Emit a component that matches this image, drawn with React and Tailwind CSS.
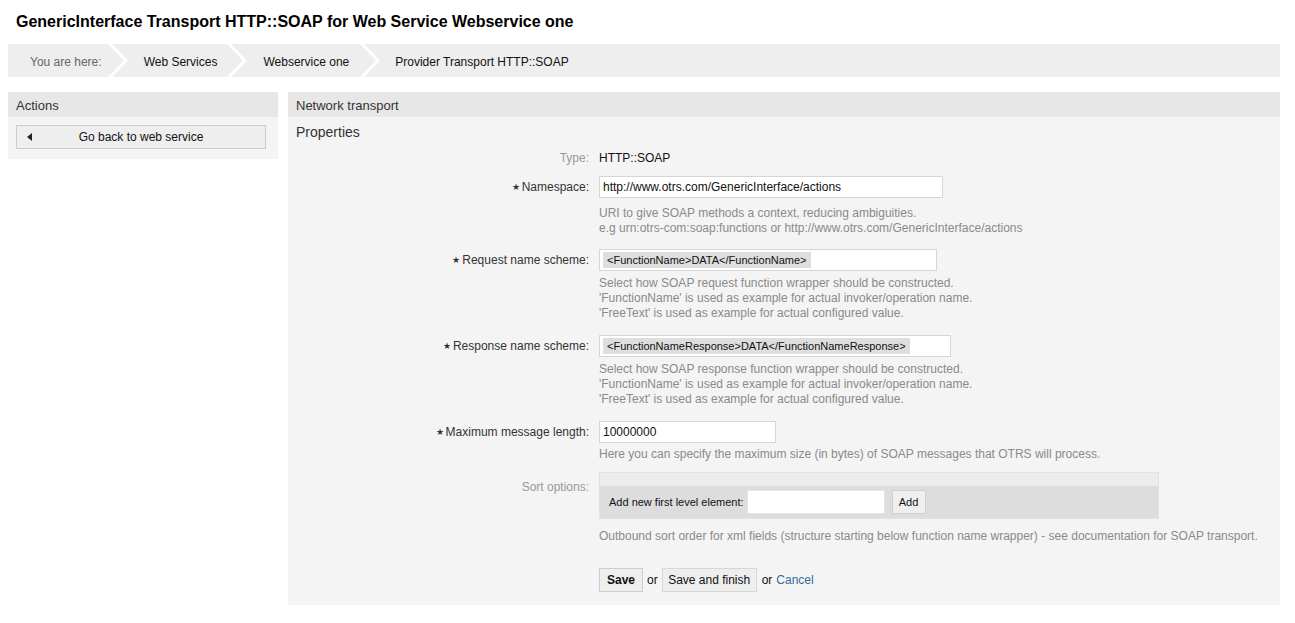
import React from "react";

const Chevron = () => (
  <svg width="20" height="33" viewBox="0 0 20 33" className="shrink-0">
    <polyline points="1,-1 18,16.5 1,34" fill="none" stroke="#ffffff" strokeWidth="3" />
  </svg>
);

const Star = () => <span className="text-[9px] mr-[2px] relative top-[-1px]">★</span>;

const Help = ({ lines, className = "" }) => (
  <div className={`ml-[311px] text-[12px] leading-[15px] text-[#8a8a8a] ${className}`}>
    {lines.map((l) => (
      <div key={l}>{l}</div>
    ))}
  </div>
);

const FieldRow = ({ label, required, children, className = "" }) => (
  <div className={`flex items-center ${className}`}>
    <div className="w-[301px] shrink-0 text-right text-[12px] text-[#333]">
      {required && <Star />}
      {label}
    </div>
    <div className="ml-[10px]">{children}</div>
  </div>
);

const TextBox = ({ width, children }) => (
  <div
    className="h-[22px] bg-white border border-[#d6d6d6] flex items-center px-[3px] text-[12px] text-[#111]"
    style={{ width }}
  >
    {children}
  </div>
);

const Scheme = ({ width, text }) => (
  <div
    className="h-[22px] bg-white border border-[#d6d6d6] flex items-center px-[3px]"
    style={{ width }}
  >
    <span className="bg-[#dedede] text-[11px] text-[#111] px-[4px] leading-[16px]">{text}</span>
  </div>
);

export default function App() {
  return (
    <div className="min-h-[623px] bg-white font-['Liberation_Sans',Arial,sans-serif] text-[#333]">
      <h1 className="pl-[16px] pt-[12px] text-[16px] leading-[19px] font-bold text-black">
        GenericInterface Transport HTTP::SOAP for Web Service Webservice one
      </h1>

      <div className="ml-[8px] mr-[15px] mt-[13px] h-[33px] bg-[#eeeeee] flex items-center text-[12px] overflow-hidden">
        <span className="pl-[22px] pr-[6px] pt-[2px] text-[#666]">You are here:</span>
        <Chevron />
        <span className="pl-[16px] pr-[10px] pt-[2px] text-[#111]">Web Services</span>
        <Chevron />
        <span className="pl-[16px] pr-[11px] pt-[2px] text-[#111]">Webservice one</span>
        <Chevron />
        <span className="pl-[15px] pt-[2px] text-[#111]">Provider Transport HTTP::SOAP</span>
      </div>

      <div className="flex items-start gap-[10px] ml-[8px] mr-[15px] mt-[15px]">
        <div className="w-[270px] shrink-0">
          <div className="h-[25px] bg-[#e7e7e7] flex items-center px-[8px] pt-[2px] text-[13px] text-[#333]">Actions</div>
          <div className="bg-[#f4f4f4] px-[8px] pt-[8px] pb-[10px]">
            <button className="w-[250px] h-[24px] bg-[#eeeeee] border border-[#cccccc] flex items-center text-[12px] text-[#111] relative">
              <svg width="5" height="8" viewBox="0 0 5 8" className="absolute left-[10px] top-[7px]">
                <polygon points="5,0 0,4 5,8" fill="#222" />
              </svg>
              <span className="w-full text-center">Go back to web service</span>
            </button>
          </div>
        </div>

        <div className="flex-1">
          <div className="h-[25px] bg-[#e7e7e7] flex items-center px-[8px] pt-[2px] text-[13px] text-[#333]">Network transport</div>
          <div className="bg-[#f4f4f4] pt-[6px] pb-[13px]">
            <div className="px-[8px] text-[14px] leading-[18px] text-[#333]">Properties</div>

            <div className="flex mt-[9px] leading-[16px]">
              <div className="w-[301px] shrink-0 text-right text-[12px] text-[#999]">Type:</div>
              <div className="ml-[10px] text-[12px] text-[#111]">HTTP::SOAP</div>
            </div>

            <FieldRow label="Namespace:" required className="mt-[10px]">
              <TextBox width={344}>http://www.otrs.com/GenericInterface/actions</TextBox>
            </FieldRow>
            <Help
              className="mt-[8px]"
              lines={[
                "URI to give SOAP methods a context, reducing ambiguities.",
                "e.g urn:otrs-com:soap:functions or http://www.otrs.com/GenericInterface/actions",
              ]}
            />

            <FieldRow label="Request name scheme:" required className="mt-[13px]">
              <Scheme width={338} text="<FunctionName>DATA</FunctionName>" />
            </FieldRow>
            <Help
              className="mt-[5px]"
              lines={[
                "Select how SOAP request function wrapper should be constructed.",
                "'FunctionName' is used as example for actual invoker/operation name.",
                "'FreeText' is used as example for actual configured value.",
              ]}
            />

            <FieldRow label="Response name scheme:" required className="mt-[14px]">
              <Scheme width={352} text="<FunctionNameResponse>DATA</FunctionNameResponse>" />
            </FieldRow>
            <Help
              className="mt-[5px]"
              lines={[
                "Select how SOAP response function wrapper should be constructed.",
                "'FunctionName' is used as example for actual invoker/operation name.",
                "'FreeText' is used as example for actual configured value.",
              ]}
            />

            <FieldRow label="Maximum message length:" required className="mt-[14px]">
              <TextBox width={177}>10000000</TextBox>
            </FieldRow>
            <Help
              className="mt-[4px]"
              lines={["Here you can specify the maximum size (in bytes) of SOAP messages that OTRS will process."]}
            />

            <div className="flex mt-[10px]">
              <div className="w-[301px] shrink-0 text-right text-[12px] text-[#999] pt-[6px]">Sort options:</div>
              <div className="ml-[10px] w-[560px] border border-[#e2e2e2]">
                <div className="h-[13px] bg-[#ececec]" />
                <div className="h-[32px] bg-[#dddddd] flex items-center px-[9px] text-[11px] text-[#111]">
                  <span>Add new first level element:</span>
                  <div className="ml-[3px] w-[138px] h-[24px] bg-white border border-[#e6e6e6]" />
                  <button className="ml-[7px] h-[24px] w-[34px] bg-[#efefef] border border-[#d0d0d0] text-[11px]">Add</button>
                </div>
              </div>
            </div>
            <Help
              className="mt-[10px]"
              lines={[
                "Outbound sort order for xml fields (structure starting below function name wrapper) - see documentation for SOAP transport.",
              ]}
            />

            <div className="ml-[311px] mt-[24px] flex items-center text-[12px] text-[#111]">
              <button className="h-[24px] w-[44px] bg-[#eeeeee] border border-[#cccccc] font-bold">Save</button>
              <span className="mx-[4px]">or</span>
              <button className="h-[24px] w-[95px] bg-[#eeeeee] border border-[#d6d6d6]">Save and finish</button>
              <span className="ml-[5px]">or</span>
              <span className="ml-[4px] text-[#2e6e99]">Cancel</span>
            </div>
          </div>
        </div>
      </div>
    </div>
  );
}
